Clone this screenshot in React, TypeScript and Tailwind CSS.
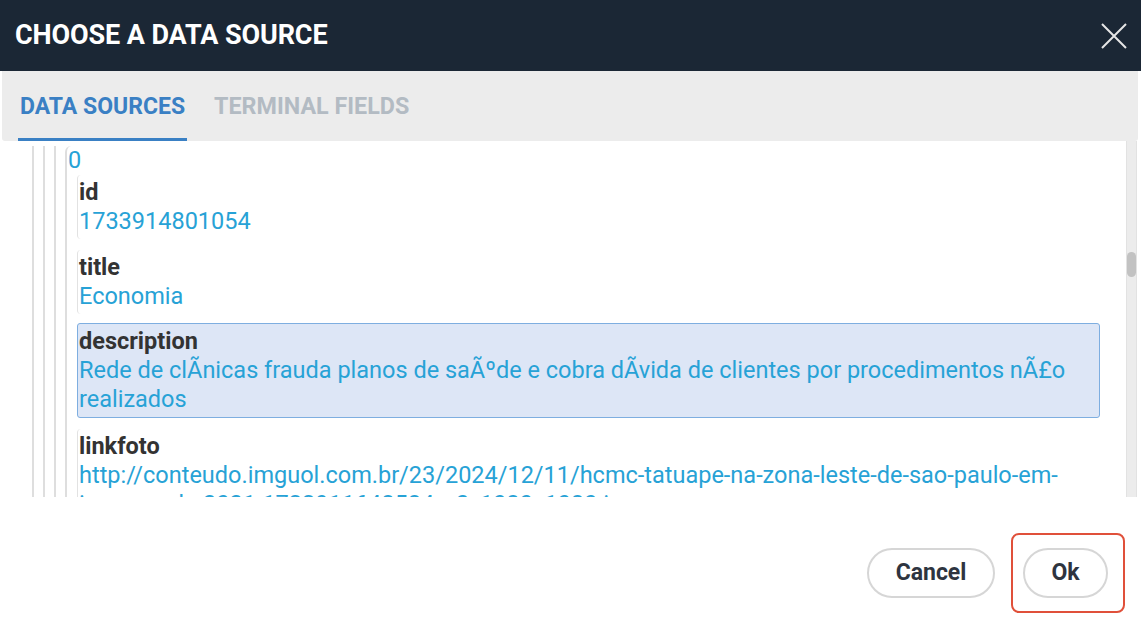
function Entry({ label, value, active }: { label: string; value: string; active?: boolean }) {
  return (
    <div
      className={
        active
          ? "-mt-[2px] mb-[11px] rounded-[3px] border border-[#7eaee0] bg-[#dde6f6] py-[3px] pl-[1px] pr-2"
          : "mb-[11px] rounded-l-[4px] border-l border-[#e2e2e2] py-[3px] pl-[1px] pr-2"
      }
    >
      <div className="font-bold text-[#333333]">{label}</div>
      <div className="text-[#27a2d6] break-words">{value}</div>
    </div>
  );
}

function Level({ children }: { children: React.ReactNode }) {
  return <div className="border-l-2 border-[#dedede] pl-[9px]">{children}</div>;
}

export default function App() {
  return (
    <div className="flex h-[623px] w-[1141px] flex-col overflow-hidden bg-white font-['Roboto',sans-serif]">
      <div className="flex h-[71px] shrink-0 items-center justify-between bg-[#1b2735] pl-[15px] pr-[13px]">
        <h1 className="text-[27px] font-bold uppercase tracking-[-0.1px] text-white">Choose a data source</h1>
        <button className="text-[#e6e6e6]">
          <svg width="28" height="28" viewBox="0 0 28 28" fill="none" stroke="currentColor" strokeWidth="2">
            <path d="M2 2 L26 26 M26 2 L2 26" />
          </svg>
        </button>
      </div>

      <div className="ml-[2px] mr-[3px] flex h-[70px] shrink-0 items-end gap-[27px] rounded-b-[3px] bg-[#ececec] pl-[16px]">
        <div className="border-b-[3px] border-[#3a80c4] px-[2px] pb-[14px] text-[23px] font-bold text-[#3a80c4]">DATA SOURCES</div>
        <div className="pb-[17px] text-[23.3px] font-bold text-[#b3bbc3]">TERMINAL FIELDS</div>
      </div>

      <div className="flex h-[356px] shrink-0">
        <div className="flex-1 overflow-hidden pl-[32px] pr-[26px] text-[23.5px] leading-[29px]">
          <Level>
            <Level>
              <Level>
                <div className="mt-[5px] rounded-tl-[6px] border-l-2 border-[#dedede] pl-[1px]">
                  <div className="text-[#27a2d6]">0</div>
                  <div className="pl-[9px]">
                    <Entry label="id" value="1733914801054" />
                    <Entry label="title" value="Economia" />
                    <Entry
                      label="description"
                      value="Rede de clÃnicas frauda planos de saÃºde e cobra dÃvida de clientes por procedimentos nÃ£o realizados"
                      active
                    />
                    <Entry
                      label="linkfoto"
                      value="http://conteudo.imguol.com.br/23/2024/12/11/hcmc-tatuape-na-zona-leste-de-sao-paulo-em-imagem-de-2021-1733911648584_v2_1080x1080.jpg"
                    />
                  </div>
                </div>
              </Level>
            </Level>
          </Level>
        </div>
        <div className="mr-[4px] flex w-[11px] flex-col border-x border-[#e2e2e2] bg-[#ececec] pt-[111px]">
          <div className="h-[25px] rounded-[5px] bg-[#c2c2c2]" />
        </div>
      </div>

      <div className="flex flex-1 items-center justify-end gap-[28px] pr-[33px] pt-[26px]">
        <button className="h-[50px] w-[128px] rounded-full border-2 border-[#d6d6d6] text-[23px] font-bold text-[#2e3440]">Cancel</button>
        <div className="relative">
          <div className="pointer-events-none absolute -left-[12px] -right-[17px] -inset-y-[15px] rounded-[8px] border-2 border-[#e0503a]" />
          <button className="h-[50px] w-[85px] rounded-full border-2 border-[#d6d6d6] text-[23px] font-bold text-[#2e3440]">Ok</button>
        </div>
      </div>
    </div>
  );
}
